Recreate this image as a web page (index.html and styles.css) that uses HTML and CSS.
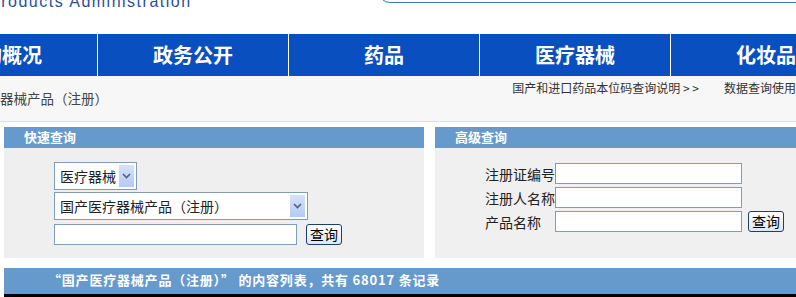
FILE: index.html
```html
<!DOCTYPE html>
<html lang="zh">
<head>
  <meta charset="UTF-8" />
  <title>数据查询</title>
  <link rel="stylesheet" href="styles.css">
</head>
<body>
  <div class="top">
    <div class="brand">Products Administration</div>
    <div class="search-box"></div>
  </div>

  <nav class="nav">
    <a href="#">机构概况</a>
    <a href="#">政务公开</a>
    <a href="#">药品</a>
    <a href="#">医疗器械</a>
    <a href="#">化妆品</a>
  </nav>

  <div class="crumb-bar">
    <div class="crumb">医疗器械产品（注册）</div>
    <div class="links">
      <a href="#">国产和进口药品本位码查询说明 &gt; &gt;</a>
      <a href="#">数据查询使用说明</a>
    </div>
  </div>

  <div class="panels">
    <section class="panel panel-quick">
      <div class="panel-head">快速查询</div>
      <div class="panel-body">
        <div class="select select-small">
          <span class="select-text">医疗器械</span>
          <span class="select-arrow"><svg width="9" height="6" viewBox="0 0 9 6"><path d="M1 1 L4.5 4.5 L8 1" fill="none" stroke="#4d6185" stroke-width="1.6"/></svg></span>
        </div>
        <div class="select select-wide">
          <span class="select-text">国产医疗器械产品（注册）</span>
          <span class="select-arrow"><svg width="9" height="6" viewBox="0 0 9 6"><path d="M1 1 L4.5 4.5 L8 1" fill="none" stroke="#4d6185" stroke-width="1.6"/></svg></span>
        </div>
        <div class="row">
          <input type="text" class="field field-quick">
          <button class="btn">查询</button>
        </div>
      </div>
    </section>

    <section class="panel panel-adv">
      <div class="panel-head">高级查询</div>
      <div class="panel-body adv-body">
        <label class="adv-row"><span class="adv-label">注册证编号</span><input type="text" class="field field-adv"></label>
        <label class="adv-row"><span class="adv-label">注册人名称</span><input type="text" class="field field-adv"></label>
        <label class="adv-row"><span class="adv-label">产品名称</span><input type="text" class="field field-adv"><button class="btn btn-adv">查询</button></label>
      </div>
    </section>
  </div>

  <div class="result-bar">“国产医疗器械产品（注册）” 的内容列表，共有 68017 条记录</div>
</body>
</html>
```

FILE: styles.css
```css
body {
  margin: 0;
  width: 796px;
  height: 297px;
  overflow: hidden;
  background: #ffffff;
  font-family: "Noto Sans CJK SC", "Liberation Sans", sans-serif;
  font-size: 12px;
  color: #333333;
}

a {
  text-decoration: none;
  color: inherit;
}

.top {
  display: flex;
  height: 34px;
}

.brand {
  flex: none;
  margin: -6px 0 0 -11px;
  font-family: "Liberation Sans", Arial, sans-serif;
  font-size: 16px;
  line-height: 16px;
  letter-spacing: 1.5px;
  color: #2a4f9a;
}

.search-box {
  flex: none;
  width: 438px;
  height: 24px;
  margin: -21px -20px 0 auto;
  border: 1px solid #3f6dbd;
  border-radius: 12px;
  box-sizing: border-box;
}

.nav {
  display: flex;
  height: 42px;
  margin-left: -93px;
  background: #0a4fc0;
}

.nav a {
  flex: none;
  width: 190px;
  border-right: 1px solid #ffffff;
  text-align: center;
  line-height: 42px;
  font-size: 20px;
  font-weight: 700;
  color: #ffffff;
}

.crumb-bar {
  display: flex;
  height: 45px;
  background: #f7f7f7;
  border-bottom: 1px solid #e6ddd4;
}

.crumb {
  flex: none;
  margin: 13px 0 0 -27px;
  font-size: 13.5px;
  line-height: 18px;
  color: #444444;
}

.links {
  flex: none;
  display: flex;
  gap: 25px;
  margin: 3px -24px 0 auto;
  white-space: nowrap;
  font-size: 12px;
  line-height: 18px;
  color: #333333;
}

.panels {
  display: flex;
  gap: 11px;
  margin-top: 5px;
  padding-left: 4px;
}

.panel-quick {
  flex: none;
  width: 420px;
}

.panel-adv {
  flex: 1;
}

.panel-head {
  height: 21px;
  padding-left: 20px;
  background: #6699cc;
  color: #ffffff;
  font-weight: 700;
  font-size: 13px;
  line-height: 20px;
}

.panel-body {
  height: 110px;
  box-sizing: border-box;
  padding: 14px 0 0 50px;
  background: #efefef;
}

.select {
  display: flex;
  align-items: center;
  box-sizing: border-box;
  height: 28px;
  border: 1px solid #7f9db9;
  background: #ffffff;
  padding: 0 2px 0 5px;
}

.select-small {
  width: 83px;
}

.select-wide {
  width: 254px;
  margin-top: 2px;
}

.select-text {
  flex: 1;
  font-size: 14px;
  color: #222222;
}

.select-arrow {
  display: flex;
  align-items: center;
  justify-content: center;
  width: 15px;
  height: 22px;
  background: linear-gradient(#d6e2fb, #b5c9f5);
}

.row {
  display: flex;
  align-items: center;
  gap: 9px;
  margin-top: 4px;
}

.field {
  box-sizing: border-box;
  height: 21px;
  border: 1px solid #7f9db9;
  background: #ffffff;
  padding: 0 3px;
  margin: 0;
}

.field-quick {
  width: 243px;
}

.btn {
  box-sizing: border-box;
  height: 21px;
  padding: 0 3px;
  border: 1px solid #1c3f73;
  border-radius: 3px;
  background: linear-gradient(#ffffff, #dfe6f2);
  font-family: "Noto Sans CJK SC", sans-serif;
  font-size: 14px;
  line-height: 17px;
  color: #000000;
}

.adv-body {
  display: flex;
  flex-direction: column;
  gap: 3px;
  padding: 15px 0 0 50px;
  background: #f0f0f0;
}

.adv-row {
  display: flex;
  align-items: center;
  gap: 6px;
}

.adv-label {
  flex: none;
  width: 70px;
  margin-right: -6px;
  font-size: 14px;
  color: #222222;
}

.field-adv {
  width: 187px;
}

.result-bar {
  margin: 10px 0 0 4px;
  height: 26px;
  padding-left: 44px;
  background: #6699cc;
  border-bottom: 3px solid #000000;
  color: #ffffff;
  font-weight: 700;
  font-size: 13px;
  letter-spacing: 0.8px;
  line-height: 24px;
}
```
